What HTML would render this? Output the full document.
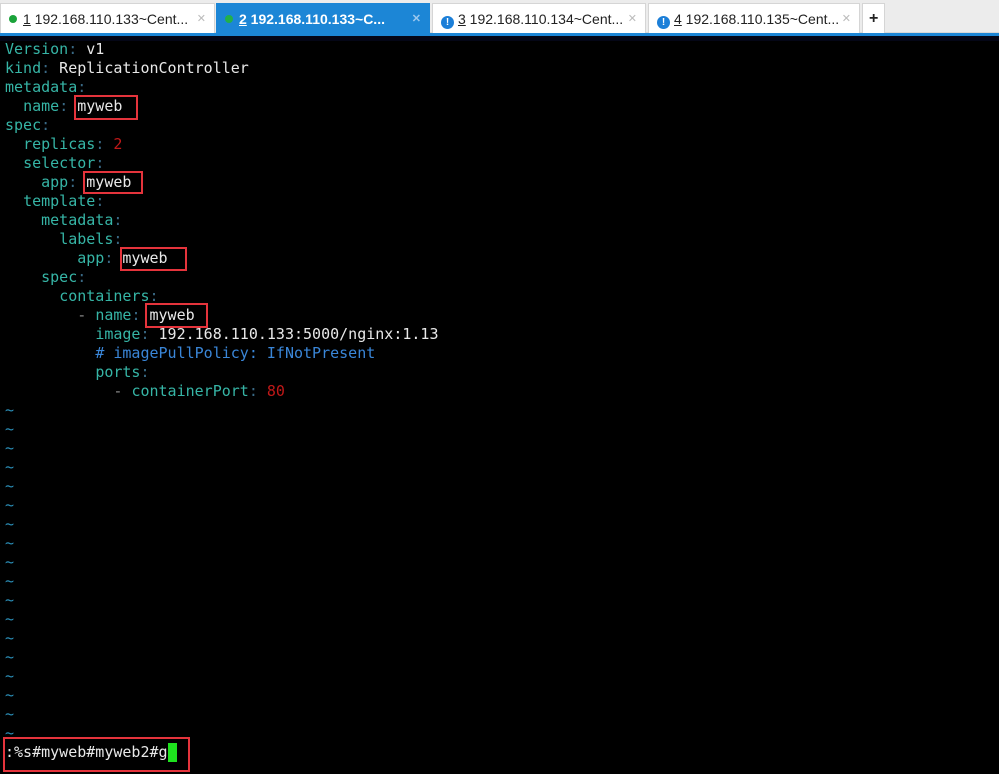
<!DOCTYPE html>
<html><head><meta charset="utf-8"><style>
*{margin:0;padding:0;box-sizing:border-box}
body{width:999px;height:774px;overflow:hidden;background:#000;position:relative;font-family:"DejaVu Sans Mono","Liberation Mono",monospace}
.bar{position:absolute;left:0;top:0;width:999px;height:33px;background:#ececec;border-bottom:1px solid #d8d8d8}
.tab{position:absolute;top:3px;height:30px;background:#fff;border:1px solid #d5d5d5;border-bottom:none;font-family:"Liberation Sans",sans-serif;font-size:14px;color:#222;line-height:30px;padding-left:8px;white-space:nowrap}
.tab.act{background:#1c86d6;color:#fff;font-weight:bold;border-color:#1c86d6}
.dot{display:inline-block;width:8px;height:8px;border-radius:50%;background:#1aa33a;margin-right:6px;vertical-align:1px}
.ex{display:inline-block;width:13px;height:13px;border-radius:50%;background:#1c7fd8;color:#fff;font-size:10px;font-weight:bold;line-height:13px;text-align:center;margin-right:4px;vertical-align:-1px}
.x{position:absolute;right:8px;top:0;color:#bbb;font-size:11px}
.blue{position:absolute;left:0;top:33px;width:999px;height:3px;background:#1c86d6}
.strip{position:absolute;left:0;top:36px;width:999px;height:5px;background:#040616}
.l{position:absolute;left:5px;font-size:15px;line-height:19px;height:19px;white-space:pre;color:#e8e8e8}
.k{color:#36b5a6}.c{color:#3a6a86}.r{color:#c01818}.b{color:#3a86d8}.g{color:#888}.t{color:#2b8fb8}
.box{position:absolute;border:2px solid #e5343c}
</style></head><body>
<div class="bar"></div>
<div class="tab" style="left:0;width:215px"><span class="dot"></span><u>1</u> 192.168.110.133~Cent...<span class="x">✕</span></div>
<div class="tab act" style="left:216px;width:214px"><span class="dot" style="background:#22b04a"></span><u>2</u> 192.168.110.133~C...<span class="x" style="color:#9cc8ee">✕</span></div>
<div class="tab" style="left:432px;width:214px"><span class="ex">!</span><u>3</u> 192.168.110.134~Cent...<span class="x">✕</span></div>
<div class="tab" style="left:648px;width:212px"><span class="ex">!</span><u>4</u> 192.168.110.135~Cent...<span class="x">✕</span></div>
<div class="tab" style="left:862px;width:23px;padding-left:6px;font-size:16px;font-weight:bold">+</div>
<div class="blue"></div><div class="strip"></div>

<div class="l" style="top:40px"><span class="k">Version</span><span class="c">:</span> v1</div>
<div class="l" style="top:59px"><span class="k">kind</span><span class="c">:</span> ReplicationController</div>
<div class="l" style="top:78px"><span class="k">metadata</span><span class="c">:</span></div>
<div class="l" style="top:97px">  <span class="k">name</span><span class="c">:</span> myweb</div>
<div class="l" style="top:116px"><span class="k">spec</span><span class="c">:</span></div>
<div class="l" style="top:135px">  <span class="k">replicas</span><span class="c">:</span> <span class="r">2</span></div>
<div class="l" style="top:154px">  <span class="k">selector</span><span class="c">:</span></div>
<div class="l" style="top:173px">    <span class="k">app</span><span class="c">:</span> myweb</div>
<div class="l" style="top:192px">  <span class="k">template</span><span class="c">:</span></div>
<div class="l" style="top:211px">    <span class="k">metadata</span><span class="c">:</span></div>
<div class="l" style="top:230px">      <span class="k">labels</span><span class="c">:</span></div>
<div class="l" style="top:249px">        <span class="k">app</span><span class="c">:</span> myweb</div>
<div class="l" style="top:268px">    <span class="k">spec</span><span class="c">:</span></div>
<div class="l" style="top:287px">      <span class="k">containers</span><span class="c">:</span></div>
<div class="l" style="top:306px">        <span class="g">-</span> <span class="k">name</span><span class="c">:</span> myweb</div>
<div class="l" style="top:325px">          <span class="k">image</span><span class="c">:</span> 192.168.110.133:5000/nginx:1.13</div>
<div class="l" style="top:344px">          <span class="b"># imagePullPolicy: IfNotPresent</span></div>
<div class="l" style="top:363px">          <span class="k">ports</span><span class="c">:</span></div>
<div class="l" style="top:382px">            <span class="g">-</span> <span class="k">containerPort</span><span class="c">:</span> <span class="r">80</span></div>
<div class="l t" style="top:401px">~
~
~
~
~
~
~
~
~
~
~
~
~
~
~
~
~
~</div>
<div class="l" style="top:743px">:%s#myweb#myweb2#g<span style="background:#1ee21e;display:inline-block;width:9px;height:19px;vertical-align:top"></span></div>

<div class="box" style="left:74px;top:95px;width:64px;height:25px"></div>
<div class="box" style="left:83px;top:171px;width:60px;height:23px"></div>
<div class="box" style="left:120px;top:247px;width:67px;height:24px"></div>
<div class="box" style="left:145px;top:303px;width:63px;height:25px"></div>
<div class="box" style="left:3px;top:737px;width:187px;height:35px"></div>
</body></html>
